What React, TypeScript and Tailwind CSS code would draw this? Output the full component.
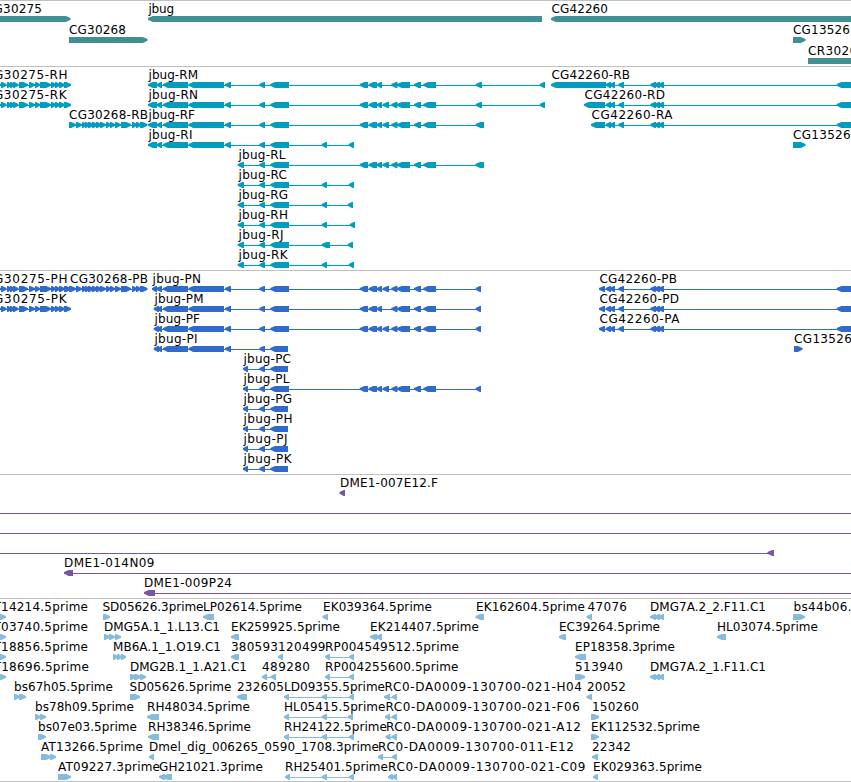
type Span = [number, number]

interface Feature {
  name?: string
  // left and right edge of the label
  text?: Span
  dir?: "l" | "r"
  blocks?: Span[]
  line?: Span
}

interface Track {
  id: string
  color: string
  className: string
  rows: Feature[][]
}

const WIDTH = 851

const f = (name: string, text: Span, dir: "l" | "r", ...blocks: Span[]): Feature => ({ name, text, dir, blocks })

// Shared exon groups
const cg30275: Span[] = [
  [-4, 1], [1, 6.5], [7, 12], [10, 15], [13, 18.5], [19, 28], [29, 35], [35, 40],
  [40, 51], [51, 56], [55, 60], [59, 65], [64, 71],
]
const cg30268: Span[] = [
  [69, 76], [76, 82], [82, 87], [85, 90], [88, 94], [92, 98], [96, 102], [100, 106],
  [106, 111], [110, 115], [115, 121], [121, 131], [132, 137], [136, 141], [140, 147.5],
]
const jbugTail: Span[] = [[163, 188], [188.5, 224], [225, 231]]
const jbugCore: Span[] = [[259.3, 265], [270.3, 289]]
const jbugCoreShort: Span[] = [[259.3, 265], [270.3, 288]]
const jbugMidA: Span[] = [[359.7, 368], [368.7, 377], [376.7, 382]]
const jbugExtra: Span[] = [[382.7, 389]]
const jbugMidB: Span[] = [[391.3, 397.5], [397, 410], [414, 421], [423.3, 436]]
const jbugMid: Span[] = [...jbugMidA, ...jbugExtra, ...jbugMidB]
const rTail: Span[] = [[148, 157], [156.5, 162], ...jbugTail]
const pTail: Span[] = [[153.7, 159], [157, 162], ...jbugTail]
const cg42260: Span[] = [[605.7, 611], [609.5, 615], [618.3, 624], [650.3, 656], [654, 660], [658.3, 664], [836.7, 860]]
const long: Span[] = [[284, 289], [321.7, 327], [349, 354]]

const tracks: Track[] = [
  {
    id: "gene",
    color: "#3f8f93",
    className: "h-[66px] gap-px",
    rows: [
      [
        f("CG30275", [-15, 42], "r", [-20, 70.5]),
        f("jbug", [148.5, 174], "l", [148, 542]),
        f("CG42260", [551.5, 608], "l", [551, 870]),
      ],
      [f("CG30268", [69, 126], "r", [69, 147.5]), f("CG13526", [793, 850], "r", [793, 805.5])],
      [f("CR30260", [808, 865], "r", [808, 880])],
    ],
  },
  {
    id: "transcript",
    color: "#009dbf",
    className: "h-[204px]",
    rows: [
      [
        f("CG30275-RH", [-15, 67.5], "r", ...cg30275),
        f("jbug-RM", [148.5, 198], "l", ...rTail, ...jbugCore, ...jbugMidA, ...jbugMidB, [475.7, 482], [539.7, 545]),
        f("CG42260-RB", [551.5, 630], "l", [551, 606], ...cg42260),
      ],
      [
        f("CG30275-RK", [-15, 66.5], "r", ...cg30275),
        f("jbug-RN", [148.5, 198], "l", ...rTail, ...jbugCore, ...jbugMid, [475.7, 482], [539.7, 545]),
        f("CG42260-RD", [584.5, 665], "l", [584, 605], ...cg42260),
      ],
      [
        f("CG30268-RB", [69, 148], "r", ...cg30268),
        f("jbug-RF", [148.5, 195], "l", ...rTail, ...jbugCore, ...jbugMid, [475.7, 484]),
        f("CG42260-RA", [591.5, 672.5], "l", [591, 605], ...cg42260),
      ],
      [
        f("jbug-RI", [148.5, 192.5], "l", ...rTail, ...jbugCore, [321.7, 327], [348.7, 354]),
        f("CG13526-RA", [793, 872], "r", [793, 805.5]),
      ],
      [f("jbug-RL", [238.5, 285.5], "l", [237.7, 244], ...jbugCore, ...jbugMid, [475.3, 484])],
      [f("jbug-RC", [238.5, 287], "l", [237.7, 244], ...jbugCore, [321.7, 327], [348.7, 354])],
      [f("jbug-RG", [238.5, 288], "l", [237.7, 244], ...jbugCore, [321.7, 327], [347.7, 353])],
      [f("jbug-RH", [238.5, 288], "l", [237.7, 244], ...jbugCore, [321.7, 327], [349.7, 355])],
      [f("jbug-RJ", [238.5, 283.5], "l", [237.7, 244], ...jbugCore, [321.7, 330], [347.7, 353])],
      [f("jbug-RK", [238.5, 287.5], "l", [237.7, 244], ...jbugCore, [321.7, 327], [348.7, 354])],
    ],
  },
  {
    id: "cds",
    color: "#306bcc",
    className: "h-[204px]",
    rows: [
      [
        f("CG30275-PH", [-15, 67.5], "r", ...cg30275),
        f("CG30268-PB", [70, 148], "r", ...cg30268),
        f("jbug-PN", [152.5, 201], "l", [152, 157], [156, 162], ...jbugTail, ...jbugCore, ...jbugMid, [475.7, 481]),
        f("CG42260-PB", [599.5, 677], "l", [599, 605], ...cg42260),
      ],
      [
        f("CG30275-PK", [-15, 66.5], "r", ...cg30275),
        f("jbug-PM", [154.5, 203.5], "l", ...pTail, ...jbugCore, ...jbugMidA, ...jbugMidB, [475.7, 481]),
        f("CG42260-PD", [599.5, 679], "l", [599, 605], ...cg42260),
      ],
      [
        f("jbug-PF", [154.5, 200], "l", ...pTail, ...jbugCore, ...jbugMid, [475.7, 481]),
        f("CG42260-PA", [599.5, 679.5], "l", [599, 605], ...cg42260),
      ],
      [
        f("jbug-PI", [154.5, 197.5], "l", ...pTail, ...jbugCoreShort),
        f("CG13526-PA", [794, 872], "r", [794, 802.5]),
      ],
      [f("jbug-PC", [243.5, 291], "l", [243, 248], ...jbugCoreShort)],
      [f("jbug-PL", [243.5, 289.5], "l", [243, 248], ...jbugCore, ...jbugMid, [475.7, 481])],
      [f("jbug-PG", [243.5, 292], "l", [243, 248], ...jbugCoreShort)],
      [f("jbug-PH", [243.5, 292.5], "l", [243, 248], ...jbugCoreShort)],
      [f("jbug-PJ", [243.5, 287.5], "l", [243, 248], ...jbugCoreShort)],
      [f("jbug-PK", [243.5, 291.5], "l", [243, 248], ...jbugCoreShort)],
    ],
  },
  {
    id: "bac",
    color: "#7657a5",
    className: "h-[124px]",
    rows: [
      [f("DME1-007E12.F", [340, 438], "l", [339.5, 345])],
      [{ line: [0, WIDTH] }],
      [{ line: [0, WIDTH] }],
      [{ line: [0, 770], dir: "l", blocks: [[767.5, 774]] }],
      [{ ...f("DME1-014N09", [64, 154.5], "l", [64, 73]), line: [70, WIDTH] }],
      [{ ...f("DME1-009P24", [144, 232], "l", [144, 155]), line: [150, WIDTH] }],
    ],
  },
  {
    id: "est",
    color: "#86bbdc",
    className: "h-[183px]",
    rows: [
      [
        f("AT14214.5prime", [-14, 88], "r", [-3, 2], [0, 6]),
        f("SD05626.3prime", [102.5, 203.5], "r", [103, 110]),
        f("LP02614.5prime", [203, 302], "l", [203, 214]),
        f("EK039364.5prime", [323, 432], "l", [322.5, 328]),
        f("EK162604.5prime", [476, 585], "l", [475.5, 484]),
        f("47076", [587.5, 627], "l", [586.5, 592]),
        f("DMG7A.2_2.F11.C1", [650, 766], "l", [650, 656], [654, 660], [658, 664]),
        f("bs44b06.5prime", [793.5, 896], "r", [793, 805]),
      ],
      [
        f("AT03740.5prime", [-14, 88], "r", [-3, 2], [0, 6]),
        f("DMG5A.1_1.L13.C1", [104, 220], "r", [104, 110], [109, 115], [115, 121]),
        f("EK259925.5prime", [231, 340], "l", [231, 239]),
        f("EK214407.5prime", [370, 479], "l", [370, 377], [375.5, 382]),
        f("EC39264.5prime", [559, 660], "l", [559, 566]),
        f("HL03074.5prime", [717, 818], "l", [717, 726]),
      ],
      [
        f("AT18856.5prime", [-14, 88], "r", [-3, 2], [0, 6]),
        f("MB6A.1_1.O19.C1", [113, 221], "r", [113, 118], [117, 122], [121, 126]),
        f("380593", [231, 278], "l", [231, 239]),
        f("120499", [278, 325.5], "l", [278, 283]),
        f("RP004549512.5prime", [325, 459], "l", [325, 330], [349, 354]),
        f("EP18358.3prime", [575, 675], "l", [575, 586]),
      ],
      [
        f("AT18696.5prime", [-14, 89], "r", [-3, 2], [0, 6]),
        f("DMG2B.1_1.A21.C1", [130, 247], "r", [130, 136], [134, 141], [140, 146]),
        f("489280", [262, 310], "l", [262, 267], [270.5, 276]),
        f("RP004255600.5prime", [325, 458.5], "l", [325, 330], [349, 354]),
        f("513940", [575, 623], "r", [575, 585]),
        f("DMG7A.2_1.F11.C1", [650, 766], "l", [650, 656], [654, 660], [658, 664]),
      ],
      [
        f("bs67h05.5prime", [14, 113], "r", [14, 20], [19, 26]),
        f("SD05626.5prime", [129.5, 231.5], "r", [130, 140]),
        f("232605", [237, 284], "l", [237, 247]),
        f("LD09355.5prime", [284, 385], "l", ...long),
        f("RC0-DA0009-130700-021-H04", [384.5, 582], "l", [384, 390], [392, 397]),
        f("20052", [587, 626], "l", [586.5, 592]),
      ],
      [
        f("bs78h09.5prime", [35, 134], "r", [35, 41], [40, 46]),
        f("RH48034.5prime", [147, 250], "l", [147, 159]),
        f("HL05415.5prime", [284, 385.5], "l", [284, 289], [321.7, 327], [348, 353]),
        f("RC0-DA0009-130700-021-F06", [385.5, 580], "l", [385, 390], [391.5, 397]),
        f("150260", [592, 639], "r", [591, 599]),
      ],
      [
        f("bs07e03.5prime", [38, 137], "r", [38, 46]),
        f("RH38346.5prime", [148, 251], "l", [148, 159]),
        f("RH24122.5prime", [284, 387], "l", ...long),
        f("RC0-DA0009-130700-021-A12", [386, 581], "l", [385.5, 390.5], [391.5, 397]),
        f("EK112532.5prime", [591, 700], "r", [591, 599]),
      ],
      [
        f("AT13266.5prime", [41, 143], "r", [41, 51], [50, 56]),
        f("Dmel_dig_006265_0590_1708.3prime", [149, 379], "l", [149, 154]),
        f("RC0-DA0009-130700-011-E12", [378, 574], "l", [378, 383], [392, 397]),
        f("22342", [592, 631], "l", [592, 598]),
      ],
      [
        f("AT09227.3prime", [58, 160], "r", [58, 71]),
        f("GH21021.3prime", [159, 263], "l", [159, 165], [163, 172]),
        f("RH25401.5prime", [285, 388], "l", [285, 290], [321.7, 327], [349, 354]),
        f("RC0-DA0009-130700-021-C09", [388, 585.5], "l", [388, 393], [392, 397]),
        f("EK029363.5prime", [593, 702], "l", [593, 598]),
      ],
    ],
  },
]

function Block({ span, dir }: { span: Span; dir: "l" | "r" }) {
  const [a, b] = span
  const head = Math.min(b - a, 6) * 0.78
  const [tip, neck, tail] = dir === "l" ? [a, a + head, b] : [b, b - head, a]
  return <polygon points={`${tip},16 ${neck},14 ${tail},14 ${tail},20 ${neck},20 ${tip},17.8`} />
}

function FeatureGlyph({ feature, color }: { feature: Feature; color: string }) {
  const { name, text, dir = "l", blocks = [] } = feature
  // introns run between the first and the last block
  const line = feature.line ?? (blocks.length > 1 ? [blocks[0][0] + 2, blocks[blocks.length - 1][1] - 2] : null)

  return (
    <g fill={color}>
      {line && <rect x={line[0]} y={17} width={line[1] - line[0]} height={1} />}
      {blocks.map((span, i) => (
        <Block key={i} span={span} dir={dir} />
      ))}
      {name && text && (
        <text x={text[0]} y={11} textLength={text[1] - text[0]} fill="#000">
          {name}
        </text>
      )}
    </g>
  )
}

export default function App() {
  return (
    <main className="flex h-[782px] w-[851px] flex-col overflow-hidden bg-white font-['DejaVu_Sans',sans-serif] text-[12px]">
      {tracks.map((track) => (
        <section key={track.id} className={`flex shrink-0 flex-col border-t border-[#c0c0c0] pt-px ${track.className}`}>
          {track.rows.map((row, i) => (
            <svg key={i} width={WIDTH} height={20} className="block shrink-0">
              {row.map((feature, j) => (
                <FeatureGlyph key={j} feature={feature} color={track.color} />
              ))}
            </svg>
          ))}
        </section>
      ))}
      <div className="h-px shrink-0 bg-[#c0c0c0]" />
    </main>
  )
}
